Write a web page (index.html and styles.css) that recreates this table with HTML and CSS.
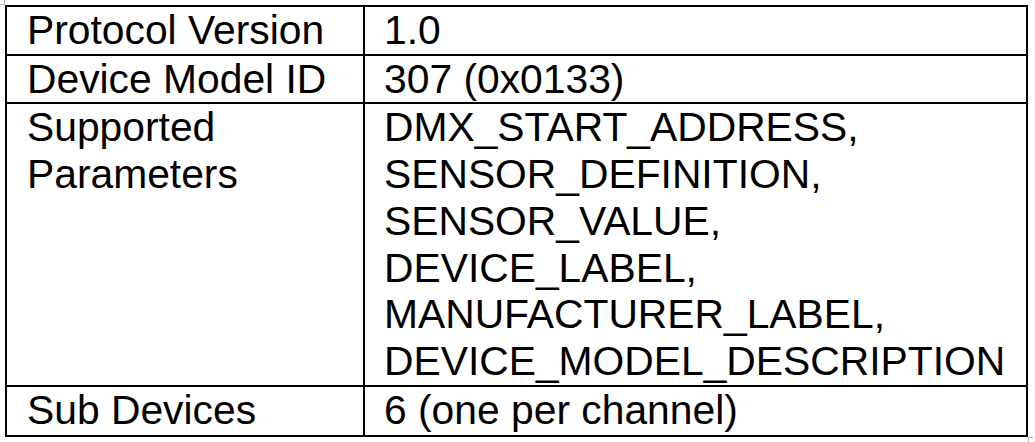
FILE: index.html
```html
<!DOCTYPE html>
<html>
<head>
<meta charset="utf-8">
<link rel="stylesheet" href="styles.css">
</head>
<body>
<div class="page">
  <span class="mark mark-tl"></span>
  <table class="info">
    <tr>
      <td class="label">Protocol Version</td>
      <td class="value">1.0</td>
    </tr>
    <tr>
      <td class="label">Device Model ID</td>
      <td class="value">307 (0x0133)</td>
    </tr>
    <tr>
      <td class="label">Supported<br>Parameters</td>
      <td class="value">DMX_START_ADDRESS,<br>SENSOR_DEFINITION,<br>SENSOR_VALUE,<br>DEVICE_LABEL,<br>MANUFACTURER_LABEL,<br>DEVICE_MODEL_DESCRIPTION</td>
    </tr>
    <tr>
      <td class="label last">Sub Devices</td>
      <td class="value last">6 (one per channel)</td>
    </tr>
  </table>
  <span class="mark mark-br"></span>
</div>
</body>
</html>
```

FILE: styles.css
```css
html, body {
  margin: 0;
  padding: 0;
  background: #ffffff;
}

.page {
  position: relative;
  width: 1035px;
  height: 442px;
  overflow: hidden;
  padding: 5px 0 0 5px;
  box-sizing: border-box;
}

.info {
  border-collapse: collapse;
  font-family: "Liberation Sans", Arial, sans-serif;
  font-size: 40.8px;
  line-height: 46.7px;
  color: #000000;
  table-layout: fixed;
  width: 1023px;
}

.info td {
  border: 2px solid #000000;
  padding: 0 4px 0 20px;
  vertical-align: top;
  white-space: nowrap;
}

.info td.label {
  width: 332px;
}

.info td.value {
  padding-left: 19px;
}

.info td.last {
  height: 48px;
}

.mark {
  position: absolute;
  width: 4px;
  height: 4px;
  border-color: #b8b8b8;
  border-style: solid;
}

.mark-tl {
  left: 0;
  top: 0;
  border-width: 0 1px 1px 0;
}

.mark-br {
  left: 1028px;
  top: 437px;
  border-width: 1px 0 0 1px;
}
```
